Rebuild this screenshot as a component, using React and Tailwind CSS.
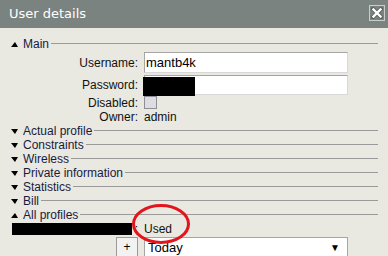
import { useState } from "react"

const sections = ["Actual profile", "Constraints", "Wireless", "Private information", "Statistics", "Bill"]

function Arrow({ open }) {
  return open ? (
    <span className="w-0 h-0 border-l-[4px] border-r-[3px] border-b-[5px] border-l-transparent border-r-transparent border-b-black" />
  ) : (
    <span className="w-0 h-0 border-l-[4px] border-r-[3px] border-t-[5px] border-l-transparent border-r-transparent border-t-black" />
  )
}

function SectionHeader({ title, open }) {
  return (
    <div className="flex items-center h-[14px] pl-[11px] pr-[10px]">
      <Arrow open={open} />
      <span className="ml-[5px] text-[#1a1a40]">{title}</span>
      <span className="flex-1 h-px bg-[#9a9a9a] ml-[2px] mt-[-1px]" />
    </div>
  )
}

function Row({ label, children, className = "" }) {
  return (
    <div className={`grid grid-cols-[138px_1fr] gap-x-[6px] items-center ${className}`}>
      <span className="text-right text-[#111]">{label}</span>
      <div className="flex items-center">{children}</div>
    </div>
  )
}

export default function App() {
  const [disabled, setDisabled] = useState(false)

  return (
    <div className="w-[388px] h-[256px] overflow-hidden bg-[#e9e9e1] relative font-['Liberation_Sans',Arial,sans-serif] text-[12px] leading-[14px]">
      {/* Title bar */}
      <div className="h-[28px] bg-[#7a8380] flex items-center justify-between pl-[9px] pr-[3px]">
        <span className="text-white text-[13px] font-['DejaVu_Sans',sans-serif]">User details</span>
        <button className="w-[16px] h-[16px] border border-[#c9cdcc] flex items-center justify-center mb-[3px]">
          <svg width="12" height="12" viewBox="0 0 12 12">
            <path d="M2 2 L10 10 M10 2 L2 10" stroke="#5a605e" strokeWidth="4" strokeLinecap="square" />
            <path d="M2.5 2.5 L9.5 9.5 M9.5 2.5 L2.5 9.5" stroke="#fff" strokeWidth="2.4" strokeLinecap="square" />
          </svg>
        </button>
      </div>

      <div className="pt-[9px]">
        <SectionHeader title="Main" open />

        <Row label="Username:" className="mt-px h-[21px]">
          <div className="w-[204px] h-[21px] bg-white border border-[#a5a5a5] border-r-[#d8d8d8] border-b-[#d8d8d8] text-[13px] leading-[19px] pl-[1px] text-black">
            mantb4k
          </div>
        </Row>
        <Row label="Password:" className="mt-px h-[21px]">
          <div className="relative w-[204px] h-[20px] bg-white border border-[#a5a5a5] border-r-[#d8d8d8] border-b-[#d8d8d8]">
            <span className="absolute left-[-2px] top-[1px] w-[52px] h-[19px] bg-black" />
          </div>
        </Row>
        <Row label="Disabled:" className="h-[15px]">
          <button
            onClick={() => setDisabled(!disabled)}
            className="w-[13px] h-[13px] bg-[#dcdce2] border border-[#8e8e94]"
          />
        </Row>
        <Row label="Owner:" className="h-[14px]">
          <span className="text-[#111]">admin</span>
        </Row>

        {sections.map((s) => (
          <SectionHeader key={s} title={s} />
        ))}
        <SectionHeader title="All profiles" open />

        <div className="grid grid-cols-[138px_1fr] gap-x-[6px] items-center h-[14px]">
          <div className="flex items-center justify-end">
            <span className="w-[120px] h-[12px] bg-black mr-[3px]" />
            <span>:</span>
          </div>
          <span className="text-[12px] text-[#111]">Used</span>
        </div>

        <div className="flex items-start mt-px pl-[116px]">
          <button className="w-[22px] h-[21px] bg-[#f2f2f2] border border-[#9a9a9a] text-[12px] leading-[17px] text-black">
            +
          </button>
          <div className="ml-[6px] w-[204px] h-[21px] bg-white border border-[#a5a5a5] flex items-center justify-between pl-[3px] pr-[7px]">
            <span className="text-[13px] text-black">Today</span>
            <span className="text-[10px] text-black">▼</span>
          </div>
        </div>
      </div>

      {/* Red annotation ring */}
      <svg className="absolute left-[131px] top-[203px]" width="62" height="42" viewBox="0 0 62 42">
        <ellipse cx="30" cy="21" rx="27.5" ry="18.5" fill="none" stroke="#e3141b" strokeWidth="3" />
      </svg>
    </div>
  )
}
